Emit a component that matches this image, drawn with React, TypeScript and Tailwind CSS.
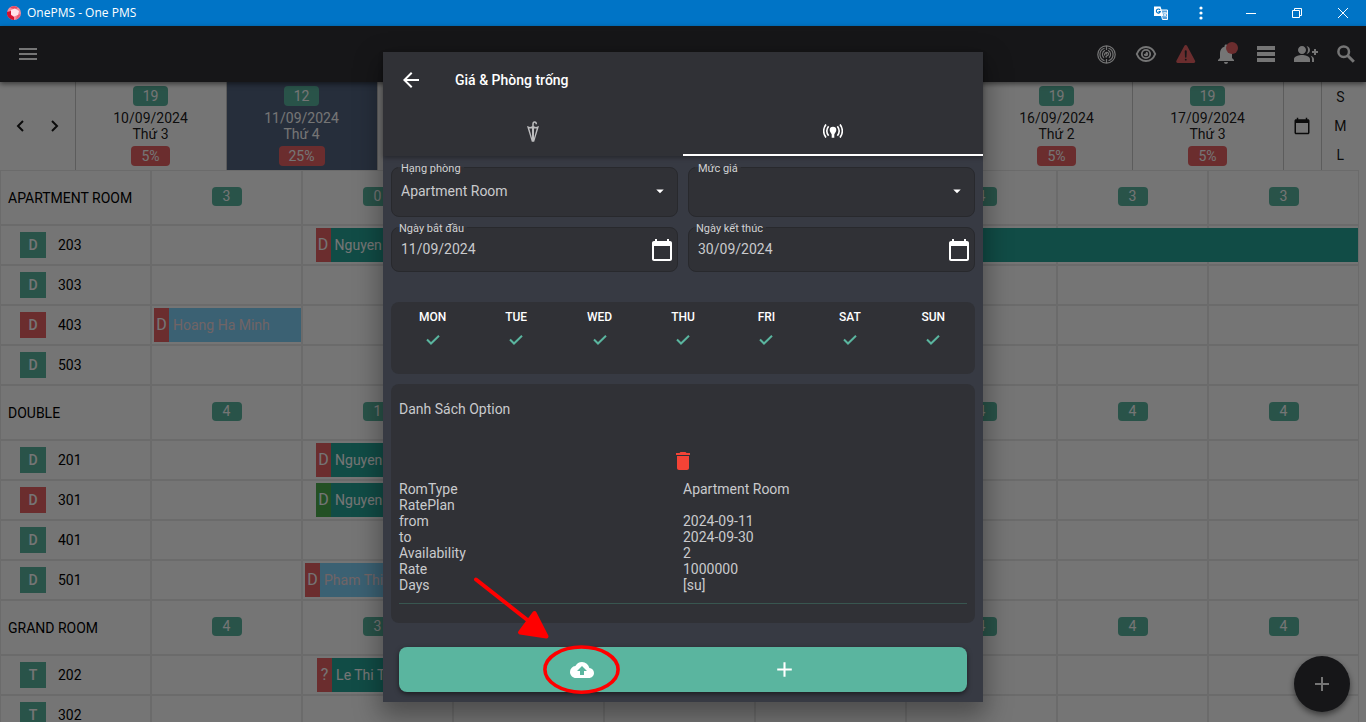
import { useState } from 'react';
import type { ReactNode } from 'react';
import {
    MdAdd,
    MdArrowBack,
    MdArrowDropDown,
    MdBackup,
    MdCalendarToday,
    MdDelete,
    MdGroupAdd,
    MdMenu,
    MdNotifications,
} from 'react-icons/md';
import { IoWarning } from 'react-icons/io5';

interface Day {
    date?: string;
    weekday?: string;
    free?: number;
    occupancy?: string;
    active?: boolean;
}

interface Booking {
    day: number;
    start: number;
    length: number;
    source: string;
    guest: string;
    status: 'due' | 'arrived';
    tone: 'teal' | 'sky';
}

interface Room {
    number: string;
    type: string;
    dirty?: boolean;
    booking?: Booking;
}

interface Group {
    name: string;
    free: (number | null)[];
    rooms: Room[];
}

const days: Day[] = [
    { date: '10/09/2024', weekday: 'Thứ 3', free: 19, occupancy: '5%' },
    { date: '11/09/2024', weekday: 'Thứ 4', free: 12, occupancy: '25%', active: true },
    {},
    {},
    {},
    {},
    { date: '16/09/2024', weekday: 'Thứ 2', free: 19, occupancy: '5%' },
    { date: '17/09/2024', weekday: 'Thứ 3', free: 19, occupancy: '5%' },
];

// start and length are counted in days
const groups: Group[] = [
    {
        name: 'APARTMENT ROOM',
        free: [3, 0, null, null, null, 4, 3, 3],
        rooms: [
            { number: '203', type: 'D', booking: { day: 1, start: 0.09, length: 6.903, source: 'D', guest: 'Nguyen', status: 'due', tone: 'teal' } },
            { number: '303', type: 'D' },
            { number: '403', type: 'D', dirty: true, booking: { day: 0, start: 0.02, length: 0.975, source: 'D', guest: 'Hoang Ha Minh', status: 'due', tone: 'sky' } },
            { number: '503', type: 'D' },
        ],
    },
    {
        name: 'DOUBLE',
        free: [4, 1, null, null, null, 4, 4, 4],
        rooms: [
            { number: '201', type: 'D', booking: { day: 1, start: 0.093, length: 1, source: 'D', guest: 'Nguyen', status: 'due', tone: 'teal' } },
            { number: '301', type: 'D', dirty: true, booking: { day: 1, start: 0.093, length: 1, source: 'D', guest: 'Nguyen', status: 'arrived', tone: 'teal' } },
            { number: '401', type: 'D' },
            { number: '501', type: 'D', booking: { day: 1, start: 0.02, length: 1, source: 'D', guest: 'Pham Thi', status: 'due', tone: 'sky' } },
        ],
    },
    {
        name: 'GRAND ROOM',
        free: [4, 3, null, null, null, 4, 4, 4],
        rooms: [
            { number: '202', type: 'T', booking: { day: 1, start: 0.1, length: 1, source: '?', guest: 'Le Thi T', status: 'due', tone: 'teal' } },
            { number: '302', type: 'T' },
        ],
    },
];

const optionRows = [
    ['RomType', 'Apartment Room'],
    ['RatePlan', ''],
    ['from', '2024-09-11'],
    ['to', '2024-09-30'],
    ['Availability', '2'],
    ['Rate', '1000000'],
    ['Days', '[su]'],
];

const weekdays = ['MON', 'TUE', 'WED', 'THU', 'FRI', 'SAT', 'SUN'];

function TitleBar() {
    return (
        <div className="flex h-[26px] shrink-0 items-center bg-[#0074c6] pl-[7px] text-white">
            <svg className="h-[14px] w-[14px]" viewBox="0 0 14 14">
                <circle cx="7" cy="7" r="7" fill="#f58a9b" />
                <path d="M0 6L4 5l0 4 3 2 0 3A7 7 0 0 1 0 6z" fill="#d5122f" />
                <path d="M7 0l4 1.4L9 3 5 2.500 3 1.600z" fill="#e8455c" />
                <path d="M10 9l3.500-1A7 7 0 0 1 9 13.500z" fill="#ee5d74" />
                <path d="M4 4l4-1.500 4 2.500-1 4-4 1.500-3-2z" fill="#ffe3ea" />
            </svg>
            <h1 className="ml-[6px] flex-1 font-['Open_Sans',sans-serif] text-[12px] leading-4">OnePMS - One PMS</h1>
            <button aria-label="Translate" className="flex h-[26px] w-10 items-center justify-center">
                <svg className="h-[14px] w-[14px]" viewBox="0 0 14 14">
                    <path d="M6 4h7.500v9.500H8.500z" fill="#5aa3dc" stroke="#fff" strokeWidth="1" />
                    <path d="M0 .5h6.500L9.500 10H0z" fill="#fff" />
                    <path d="M6 3.900A2 2 0 1 0 6.300 5.600H4.500" fill="none" stroke="#0074c6" strokeWidth="1.100" />
                    <path d="M9 7h4M11 6v1M12.300 7c-.3 1.500-1.300 2.700-2.500 3.500M10 8c.5 1 1.400 2 2.500 2.500" fill="none" stroke="#fff" strokeWidth=".9" />
                </svg>
            </button>
            <button aria-label="More" className="flex h-[26px] w-10 items-center justify-center">
                <svg className="h-[14px] w-1" viewBox="0 0 4 14" fill="#fff">
                    <circle cx="2" cy="2" r="1.600" />
                    <circle cx="2" cy="7" r="1.600" />
                    <circle cx="2" cy="12" r="1.600" />
                </svg>
            </button>
            <div className="ml-[7px] flex">
                <button aria-label="Minimize" className="flex h-[26px] w-[46px] items-center justify-center">
                    <svg className="h-[10px] w-[10px]" viewBox="0 0 10 10" stroke="#fff" fill="none"><path d="M0 5.500h10" /></svg>
                </button>
                <button aria-label="Restore" className="flex h-[26px] w-[46px] items-center justify-center">
                    <svg className="h-[10px] w-[10px]" viewBox="0 0 10 10" stroke="#fff" fill="none"><path d="M.5 2.500h7v7h-7zM2.500 2.500v-2h7v7h-2" /></svg>
                </button>
                <button aria-label="Close" className="flex h-[26px] w-[46px] items-center justify-center">
                    <svg className="h-[10px] w-[10px]" viewBox="0 0 10 10" stroke="#fff" fill="none"><path d="M0 0l10 10M10 0L0 10" /></svg>
                </button>
            </div>
        </div>
    );
}

function ToolButton({ label, children }: { label: string; children: ReactNode }) {
    return (
        <button aria-label={label} className="relative flex h-10 w-10 items-center justify-center text-white">
            {children}
        </button>
    );
}

function Toolbar() {
    return (
        <header className="relative z-20 flex h-14 shrink-0 items-center bg-[#303136] pl-2 shadow-[0_2px_5px_rgba(0,0,0,0.5)]">
            <ToolButton label="Menu"><MdMenu size={24} /></ToolButton>
            <nav className="ml-auto flex">
                <ToolButton label="Channels">
                    <svg className="h-[19px] w-[19px]" viewBox="0 0 19 19" fill="none" stroke="currentColor" strokeWidth="1.200">
                        <circle cx="9.500" cy="9.500" r="8.700" />
                        <path d="M7.500 3.300a6.500 6.500 0 0 0 0 12.400M11.500 3.300a6.500 6.500 0 0 1 0 12.400" />
                        <path d="M8 5.300a4.500 4.500 0 0 0-1 7.500M11 5.300a4.500 4.500 0 0 1 1 7.500" />
                        <path d="M7.500 10.500c0-4 4-4 4-1.500s-4 1.500-2 3.500M9.500 1v4M9.500 14v4M9.500 7.500v2" />
                    </svg>
                </ToolButton>
                <ToolButton label="View">
                    <svg className="h-[18px] w-[22px]" viewBox="0 0 22 18" fill="none" stroke="currentColor" strokeWidth="2">
                        <path d="M1.800 9C3.600 4.500 6.800 2 11 2s7.400 2.500 9.200 7c-1.800 4.500-5 7-9.200 7s-7.400-2.500-9.200-7z" strokeLinejoin="round" />
                        <circle cx="11" cy="9" r="4.200" strokeWidth="1.800" />
                        <path d="M11 6.800A2.200 2.200 0 1 1 8.800 9 2 2 0 0 0 11 6.800z" fill="currentColor" stroke="none" />
                    </svg>
                </ToolButton>
                <ToolButton label="Warnings"><IoWarning size={24} className="text-[#e96365]" /></ToolButton>
                <ToolButton label="Notifications">
                    <MdNotifications size={24} />
                    <span className="absolute top-2 right-2 h-3 w-3 rounded-full bg-[#e96365]" />
                </ToolButton>
                <ToolButton label="List">
                    <svg className="h-4 w-[18px]" viewBox="0 0 18 16" fill="currentColor">
                        <path d="M0 0h18v4H0zM0 6h18v4H0zM0 12h18v4H0z" />
                    </svg>
                </ToolButton>
                <ToolButton label="Add guest"><MdGroupAdd size={24} /></ToolButton>
                <ToolButton label="Search">
                    <svg className="h-[18px] w-[18px]" viewBox="0 0 18 18" fill="none" stroke="currentColor">
                        <circle cx="6.700" cy="6.700" r="5.300" strokeWidth="2.500" />
                        <path d="M10.800 10.800l6 6" strokeWidth="3" />
                    </svg>
                </ToolButton>
            </nav>
        </header>
    );
}

function DayHeader() {
    return (
        <div className="grid h-[88px] grid-cols-18 text-center text-sm leading-4 text-black/90">
            <div className="flex items-center justify-around border-r border-[#c8c8c8] px-[2px]">
                <button aria-label="Previous day">
                    <svg className="h-3 w-2" viewBox="0 0 8 12" fill="none" stroke="currentColor" strokeWidth="2"><path d="M7 1L2 6l5 5" /></svg>
                </button>
                <button aria-label="Next day">
                    <svg className="h-3 w-2" viewBox="0 0 8 12" fill="none" stroke="currentColor" strokeWidth="2"><path d="M1 1l5 5-5 5" /></svg>
                </button>
            </div>
            {days.map((day, i) => (
                <div
                    key={i}
                    className={`col-span-2 flex flex-col items-center border-r border-[#c8c8c8] pt-1 ${day.active ? 'bg-[#536480] text-white' : ''}`}
                >
                    {day.date && (
                        <>
                            <span className="rounded bg-[#5ab59f] px-[10px] py-[2px] text-white">{day.free}</span>
                            <span className="mt-1">{day.date}</span>
                            <span>{day.weekday}</span>
                            <span className="mt-1 rounded bg-[#e96365] px-[10px] py-[2px] text-white">{day.occupancy}</span>
                        </>
                    )}
                </div>
            ))}
            <div className="flex">
                <button aria-label="Pick date" className="flex flex-1 items-center justify-center border-r border-[#c8c8c8]">
                    <MdCalendarToday size={18} />
                </button>
                <div className="flex flex-1 flex-col">
                    <button className="flex-1">S</button>
                    <button className="flex-1">M</button>
                    <button className="flex-1">L</button>
                </div>
            </div>
        </div>
    );
}

function BookingBar({ booking }: { booking: Booking }) {
    return (
        <div
            className={`absolute inset-y-[3px] z-10 flex ${booking.tone === 'teal' ? 'bg-[#26a69a] text-white' : 'bg-[#81d4fa] text-[#f3d9dd]'}`}
            style={{ left: `${booking.start * 100}%`, width: `${booking.length * 100}%` }}
        >
            <span className={`flex w-[15px] items-center justify-center text-base text-white ${booking.status === 'due' ? 'bg-[#e96365]' : 'bg-[#4caf50]'}`}>
                {booking.source}
            </span>
            <span className="self-center pl-1 text-sm whitespace-nowrap">{booking.guest}</span>
        </div>
    );
}

const cell = 'relative p-0 shadow-[inset_0_0_0_1px_#eaeaea]';

function RoomPlan() {
    return (
        <table className="w-full table-fixed border-separate border-spacing-0 text-sm leading-4 text-black">
            <tbody>
                {groups.map((group) => [
                    <tr key={group.name} className="h-[55px]">
                        <th scope="row" className={`${cell} pl-2 text-left font-normal whitespace-nowrap`}>{group.name}</th>
                        {group.free.map((free, i) => (
                            <td key={i} className={`${cell} pb-[2px]`}>
                                {free !== null && (
                                    <div className="mx-auto h-[19px] w-[30px] rounded bg-[#5ab59f] text-center leading-[19px] text-white">{free}</div>
                                )}
                            </td>
                        ))}
                    </tr>,
                    ...group.rooms.map((room) => (
                        <tr key={room.number} className="h-10">
                            <th scope="row" className={`${cell} font-normal`}>
                                <div className="flex items-center gap-3 pl-5">
                                    <span className={`flex h-[26px] w-[26px] items-center justify-center font-medium text-white ${room.dirty ? 'bg-[#e96365]' : 'bg-[#5ab59f]'}`}>
                                        {room.type}
                                    </span>
                                    {room.number}
                                </div>
                            </th>
                            {days.map((_, i) => (
                                <td key={i} className={cell}>
                                    {room.booking?.day === i && <BookingBar booking={room.booking} />}
                                </td>
                            ))}
                        </tr>
                    )),
                ])}
            </tbody>
        </table>
    );
}

function SelectField({ id, label, options }: { id: string; label: string; options: string[] }) {
    return (
        <div className="relative h-[50px] rounded-lg border border-[#28292d] bg-[#303136]">
            <label htmlFor={id} className="absolute -top-[6px] left-[6px] bg-linear-to-b from-[#373a43] from-[5px] to-[#303136] to-[5px] px-[3px] text-[11px] leading-[14px] text-[#d0d1d4]">
                {label}
            </label>
            <select id={id} className="h-full w-full appearance-none bg-transparent px-[9px] pb-[2px] text-sm text-[#c9cacd] outline-none">
                {options.map((option) => <option key={option}>{option}</option>)}
            </select>
            <MdArrowDropDown size={18} className="pointer-events-none absolute top-[14px] right-2 text-white" />
        </div>
    );
}

function DateField({ id, label, value }: { id: string; label: string; value: string }) {
    return (
        <div className="relative flex h-[45px] items-center rounded-lg border border-[#28292d] bg-[#303136] pr-[3px] pl-[9px]">
            <label htmlFor={id} className="absolute -top-[6px] left-1 bg-linear-to-b from-[#373a43] from-[5px] to-[#303136] to-[5px] px-[3px] text-[11px] leading-[14px] text-[#d0d1d4]">
                {label}
            </label>
            <input id={id} type="text" defaultValue={value} className="min-w-0 flex-1 bg-transparent pb-[2px] text-sm text-[#c9cacd] outline-none" />
            <button aria-label={`${label} - lịch`} className="text-white"><MdCalendarToday size={24} /></button>
        </div>
    );
}

function Tabs() {
    return (
        <div role="tablist" className="flex h-12">
            <button role="tab" aria-label="Umbrella" aria-selected={false} className="flex flex-1 items-center justify-center pb-[2px] text-[#bdbdbf]">
                <svg className="h-[21px] w-3" viewBox="0 0 12 21" fill="none" stroke="currentColor">
                    <path d="M6 7V3.200C6 .3 9.300.3 9.300 3.200" strokeWidth="1.500" />
                    <path d="M0 5l3 .9L6 5l3 .9L12 5 7.200 20.800H4.800zM2.300 7.400l2.700 9.600V7.400zM9.700 7.400H7V17z" fill="currentColor" fillRule="evenodd" stroke="none" />
                </svg>
            </button>
            <button role="tab" aria-label="Broadcast" aria-selected className="flex flex-1 items-center justify-center border-b-2 border-white text-white">
                <svg className="h-[14px] w-5" viewBox="0 0 20 14" fill="none" stroke="currentColor" strokeWidth="1.600">
                    <path d="M3 .4a10.500 10.500 0 0 0 0 13.200M17 .4a10.500 10.500 0 0 1 0 13.200" />
                    <path d="M5.600 2.200a8 8 0 0 0 0 9.600M14.400 2.200a8 8 0 0 1 0 9.600" />
                    <path d="M10 2.800a3.300 3.300 0 0 1 3.300 3.300c0 1.800-1.300 2.700-2 4.300v3.400H8.700v-3.400c-.7-1.600-2-2.500-2-4.300A3.300 3.300 0 0 1 10 2.800z" fill="currentColor" stroke="none" />
                </svg>
            </button>
        </div>
    );
}

function RateDialog() {
    const [checked, setChecked] = useState(weekdays.map(() => true));
    const toggle = (index: number) => setChecked(checked.map((value, i) => (i === index ? !value : value)));
    return (
        <section role="dialog" aria-labelledby="dialog-title" className="flex w-[600px] flex-col bg-[#373a43] shadow-[0_11px_24px_3px_rgba(0,0,0,0.35)]">
            <header className="z-10 bg-[#303136] shadow-[0_2px_4px_rgba(0,0,0,0.3)]">
                <div className="flex h-14 items-center">
                    <button aria-label="Back" className="flex w-14 items-center justify-center text-white"><MdArrowBack size={24} /></button>
                    <h2 id="dialog-title" className="ml-4 text-sm font-medium text-white">Giá &amp; Phòng trống</h2>
                </div>
                <Tabs />
            </header>
            <form className="px-2 pt-[11px]" onSubmit={(e) => e.preventDefault()}>
                <div className="grid grid-cols-2 gap-[10px]">
                    <SelectField id="room-type" label="Hạng phòng" options={['Apartment Room']} />
                    <SelectField id="rate-plan" label="Mức giá" options={['']} />
                    <DateField id="from" label="Ngày bắt đầu" value="11/09/2024" />
                    <DateField id="to" label="Ngày kết thúc" value="30/09/2024" />
                </div>
                <div className="mt-[30px] grid h-[72px] grid-cols-7 rounded-lg bg-[#303136] pt-[7px]">
                    {weekdays.map((name, i) => (
                        <label key={name} className="flex flex-col items-center gap-[6px] text-xs leading-4 font-medium text-white">
                            {name}
                            <span className="grid place-items-center">
                                <input
                                    type="checkbox"
                                    checked={checked[i]}
                                    onChange={() => toggle(i)}
                                    className="col-start-1 row-start-1 h-[18px] w-[18px] appearance-none"
                                />
                                {checked[i] && (
                                    <svg className="pointer-events-none col-start-1 row-start-1 h-[10px] w-[14px] text-[#5ab59f]" viewBox="0 0 14 10" fill="none" stroke="currentColor" strokeWidth="2">
                                        <path d="M1 4.500l4 4L13 .8" />
                                    </svg>
                                )}
                            </span>
                        </label>
                    ))}
                </div>
                <div className="mt-[10px] rounded-lg bg-[#303136] px-2 pt-[17px] pb-[19px] text-sm leading-4 text-[#c9cacd]">
                    <h3>Danh Sách Option</h3>
                    <button type="button" aria-label="Delete option" className="mx-auto mt-8 block text-[#f44336]"><MdDelete size={24} /></button>
                    <table className="mt-2 w-full table-fixed">
                        <tbody>
                            {optionRows.map(([name, value]) => (
                                <tr key={name} className="h-4">
                                    <th scope="row" className="p-0 text-left font-normal">{name}</th>
                                    <td className="p-0">{value}</td>
                                </tr>
                            ))}
                        </tbody>
                    </table>
                    <hr className="mt-[10px] border-[#385650]" />
                </div>
                <div className="mx-2 mt-6 flex h-[45px] justify-evenly rounded-lg bg-[#5ab59f] text-white shadow-[0_2px_5px_rgba(0,0,0,0.5)]">
                    <button type="button" aria-label="Upload" className="relative flex w-10 items-center justify-center">
                        <MdBackup size={24} />
                        <Highlight />
                    </button>
                    <button type="button" aria-label="Add" className="flex w-10 items-center justify-center"><MdAdd size={25} /></button>
                </div>
            </form>
        </section>
    );
}

// red arrow and ring that point at the upload button
function Highlight() {
    return (
        <svg className="pointer-events-none absolute -top-[77px] -left-[92px] h-[130px] w-[155px] max-w-none" viewBox="0 0 155 130">
            <path d="M6 9.500L60 52" stroke="#f00" strokeWidth="4" strokeLinecap="round" />
            <path d="M64.500 43L50 62.500 76.500 66.500z" fill="#f00" stroke="#f00" strokeWidth="4" strokeLinejoin="round" />
            <ellipse cx="111.500" cy="99.600" rx="36.600" ry="22.600" fill="none" stroke="#f00" strokeWidth="3.600" />
        </svg>
    );
}

export default function App() {
    return (
        <div className="flex h-screen flex-col overflow-hidden bg-white font-[Roboto,sans-serif]">
            <TitleBar />
            <div className="relative flex min-h-0 flex-1 flex-col">
                <Toolbar />
                <main className="mr-[7px] min-h-0 flex-1 overflow-hidden">
                    <DayHeader />
                    <RoomPlan />
                </main>
                <button aria-label="New booking" className="absolute right-4 bottom-[10px] z-20 flex h-14 w-14 items-center justify-center rounded-full bg-[#303136] text-white shadow-[0_3px_6px_rgba(0,0,0,0.5)]">
                    <MdAdd size={24} />
                </button>
                <div className="absolute inset-0 z-30 flex justify-center bg-black/54 pt-[26px] pb-5">
                    <RateDialog />
                </div>
            </div>
        </div>
    );
}
